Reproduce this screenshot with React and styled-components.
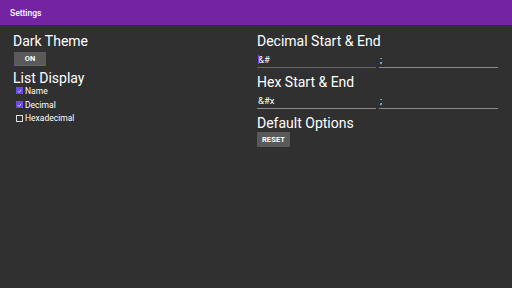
import React from "react";
import styled, { createGlobalStyle } from "styled-components";

const GlobalStyle = createGlobalStyle`
  html, body {
    margin: 0;
    padding: 0;
    background: #303030;
    font-family: Roboto, "Noto Sans", sans-serif;
    color: #fff;
  }
`;

const Page = styled.div`
  width: 512px;
  height: 288px;
  background: #303030;
  overflow: hidden;
`;

const TopBar = styled.div`
  height: 25px;
  background: #7424a2;
  display: flex;
  align-items: center;
  padding-left: 10px;
  font-size: 8.5px;
  font-weight: 500;
`;

const Content = styled.div`
  display: flex;
  padding: 8px 0 0 13px;
`;

const Column = styled.div`
  display: flex;
  flex-direction: column;
  width: ${(p) => p.width}px;
`;

const Heading = styled.div`
  font-size: 14px;
  line-height: 16px;
  height: 16px;
  margin-top: ${(p) => p.top || 0}px;
`;

const FlatButton = styled.button`
  width: ${(p) => p.w}px;
  height: ${(p) => p.h}px;
  margin: ${(p) => p.top}px 0 0 ${(p) => p.left || 0}px;
  padding: 0;
  border: none;
  border-bottom: 1px solid ${(p) => (p.accent ? "#6b4ce0" : "transparent")};
  border-radius: 1px;
  background: #5a5a5a;
  color: #fff;
  font-family: inherit;
  font-size: 7.5px;
  font-weight: 700;
  letter-spacing: 0.1px;
`;

const CheckList = styled.div`
  display: flex;
  flex-direction: column;
  margin-top: -2px;
`;

const CheckRow = styled.label`
  display: flex;
  align-items: center;
  height: 13.7px;
  padding-left: 3px;
  font-size: 8.5px;
`;

const Box = styled.span`
  width: 7px;
  height: 7px;
  box-sizing: border-box;
  margin-right: 2px;
  border: 1px solid ${(p) => (p.checked ? "#6b4ce0" : "#e0e0e0")};
  background: ${(p) => (p.checked ? "#6b4ce0" : "transparent")};
  display: flex;
  align-items: center;
  justify-content: center;
`;

const FieldRow = styled.div`
  display: flex;
  gap: 3px;
  margin: 3px 0 6px;
`;

const Field = styled.div`
  width: ${(p) => p.width}px;
  height: 16px;
  box-sizing: border-box;
  border-bottom: ${(p) => (p.focused ? "1.5px solid #6b4ce0" : "1px solid #8a8a8a")};
  font-size: 9.5px;
  display: flex;
  align-items: center;
  padding-left: 1px;
  position: relative;
`;

const Caret = styled.span`
  position: absolute;
  left: 1px;
  top: 3px;
  width: 1px;
  height: 9px;
  background: #6b4ce0;
`;

const Check = () => (
  <svg width="6" height="6" viewBox="0 0 6 6">
    <path d="M1 3.2 L2.4 4.6 L5 1.6" fill="none" stroke="#fff" strokeWidth="0.8" />
  </svg>
);

const options = [
  { label: "Name", checked: true },
  { label: "Decimal", checked: true },
  { label: "Hexadecimal", checked: false },
];

export default function App() {
  return (
    <Page>
      <GlobalStyle />
      <TopBar>Settings</TopBar>
      <Content>
        <Column width={244}>
          <Heading>Dark Theme</Heading>
          <FlatButton w={32} h={14} top={3} left={1} accent>
            ON
          </FlatButton>
          <Heading top={4}>List Display</Heading>
          <CheckList>
            {options.map((o) => (
              <CheckRow key={o.label}>
                <Box checked={o.checked}>{o.checked && <Check />}</Box>
                {o.label}
              </CheckRow>
            ))}
          </CheckList>
        </Column>
        <Column width={241}>
          <Heading>Decimal Start &amp; End</Heading>
          <FieldRow>
            <Field width={119} focused>
              <Caret />
              &amp;#
            </Field>
            <Field width={119}>;</Field>
          </FieldRow>
          <Heading>Hex Start &amp; End</Heading>
          <FieldRow>
            <Field width={119}>&amp;#x</Field>
            <Field width={119}>;</Field>
          </FieldRow>
          <Heading>Default Options</Heading>
          <FlatButton w={33} h={15} top={1}>
            RESET
          </FlatButton>
        </Column>
      </Content>
    </Page>
  );
}
